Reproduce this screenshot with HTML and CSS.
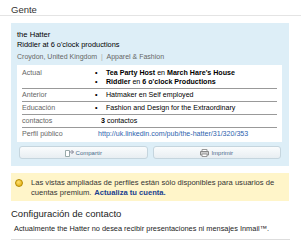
FILE: index.html
```html
<!DOCTYPE html>
<html lang="es">
<head>
    <meta charset="UTF-8">
    <meta name="viewport" content="width=device-width, initial-scale=1.0">
    <title>Gente</title>
    <link rel="stylesheet" href="styles.css">
</head>
<body>
    <h2 class="section-title">Gente</h2>

    <div class="profile-card">
        <p class="name">the Hatter</p>
        <p class="headline">Riddler at 6 o'clock productions</p>
        <p class="location">Croydon, United Kingdom <span class="sep">|</span> Apparel &amp; Fashion</p>

        <div class="info">
            <div class="row">
                <div class="label">Actual</div>
                <ul class="value">
                    <li><b>Tea Party Host</b> en <b>March Hare's House</b></li>
                    <li><b>Riddler</b> en <b>6 o'clock Productions</b></li>
                </ul>
            </div>
            <div class="row">
                <div class="label">Anterior</div>
                <ul class="value">
                    <li>Hatmaker en Self employed</li>
                </ul>
            </div>
            <div class="row">
                <div class="label">Educación</div>
                <ul class="value">
                    <li>Fashion and Design for the Extraordinary</li>
                </ul>
            </div>
            <div class="row">
                <div class="label">contactos</div>
                <div class="value plain"><b>3</b> contactos</div>
            </div>
            <div class="row">
                <div class="label">Perfil público</div>
                <div class="value link">http://uk.linkedin.com/pub/the-hatter/31/320/353</div>
            </div>
        </div>

        <div class="actions">
            <button class="action">
                <svg width="9" height="8" viewBox="0 0 9 8"><path d="M0.5 1.5h4v6h-4z" fill="#fff" stroke="#9aa"/><path d="M4 3h4.5M6.5 1l2 2-2 2" fill="none" stroke="#889"/></svg>
                Compartir
            </button>
            <button class="action">
                <svg width="9" height="8" viewBox="0 0 9 8"><path d="M2 .5h5v2H2z" fill="#fff" stroke="#999"/><path d="M.5 2.5h8v3.5h-8z" fill="#ccc" stroke="#888"/><path d="M2 5h5v2.5H2z" fill="#fff" stroke="#999"/></svg>
                Imprimir
            </button>
        </div>
    </div>

    <div class="notice">
        <span class="notice-icon"></span>
        <p>Las vistas ampliadas de perfiles están sólo disponibles para usuarios de cuentas premium.<a href="#">Actualiza tu cuenta.</a></p>
    </div>

    <h2 class="contact-title">Configuración de contacto</h2>
    <p class="contact-text">Actualmente the Hatter no desea recibir presentaciones ni mensajes Inmail™.</p>
    <div class="bottom-line"></div>
</body>
</html>
```
FILE: styles.css
```css
body{
    margin: 0;
    background: #fff;
    font-family: "Liberation Sans", Arial, sans-serif;
    color: #000;
}
p{
    margin: 0;
}
.section-title{
    margin: 0;
    padding: 4px 11px 0;
    height: 11px;
    font-size: 9.5px;
    line-height: 11px;
    font-weight: normal;
    color: #333;
    border-bottom: 1px solid #e4e4e4;
}
.profile-card{
    margin: 7px 12px 0 11px;
    padding: 7px 7px 7px 6px;
    background: #ddeef7;
}
.name{
    font-size: 7.6px;
    line-height: 10px;
}
.headline{
    font-size: 7.4px;
    line-height: 10px;
}
.location{
    margin-top: 2px;
    font-size: 7px;
    line-height: 10px;
    color: #666;
}
.sep{
    color: #aaa;
    margin: 0 2px;
}
.info{
    margin-top: 3px;
    background: #fff;
    padding: 2px 5px 2px;
}
.row{
    display: flex;
    border-bottom: 1px solid #999;
    padding: 2px 0 1px;
    font-size: 7.1px;
    line-height: 9px;
}
.row:last-child{
    border-bottom: none;
}
.label{
    width: 73px;
    flex: none;
    color: #666;
}
.value{
    margin: 0;
    padding: 0;
    list-style: none;
}
.value li::before{
    content: "•";
    display: inline-block;
    width: 11px;
    font-weight: bold;
}
.plain{
    padding-left: 6px;
}
.link{
    padding-left: 3px;
    color: #2c62ad;
}
.actions{
    display: grid;
    grid-template-columns: 1fr 1fr;
    gap: 5px;
    margin: 4px 1px 0 2px;
}
.action{
    height: 13px;
    display: flex;
    align-items: center;
    justify-content: center;
    gap: 2px;
    border: 1px solid #c5d5de;
    border-radius: 3px;
    background: linear-gradient(#fafcfd, #e8eef2);
    font-family: "Liberation Sans", Arial, sans-serif;
    font-size: 6px;
    color: #4a6a8a;
    padding: 0;
}
.notice{
    display: flex;
    gap: 8px;
    margin: 7px 12px 0 11px;
    padding: 5px 4px 4px 4px;
    background: #fff5c9;
    font-size: 7.6px;
    line-height: 9.5px;
    color: #333;
}
.notice-icon{
    flex: none;
    width: 6px;
    height: 6px;
    margin-top: 1px;
    border-radius: 50%;
    border: 1px solid #b58a00;
    background: radial-gradient(circle at 40% 35%, #ffe070, #e0a800);
}
.notice a{
    margin-left: 3px;
    color: #1a3f8f;
    font-weight: bold;
    text-decoration: none;
}
.contact-title{
    margin: 7px 11px 0;
    font-size: 9.5px;
    line-height: 11px;
    font-weight: normal;
    color: #222;
}
.contact-text{
    margin: 5px 14px 0;
    font-size: 7.4px;
    line-height: 9px;
    color: #222;
}
.bottom-line{
    margin: 6px 11px 0;
    border-top: 1px solid #ddd;
}
```
